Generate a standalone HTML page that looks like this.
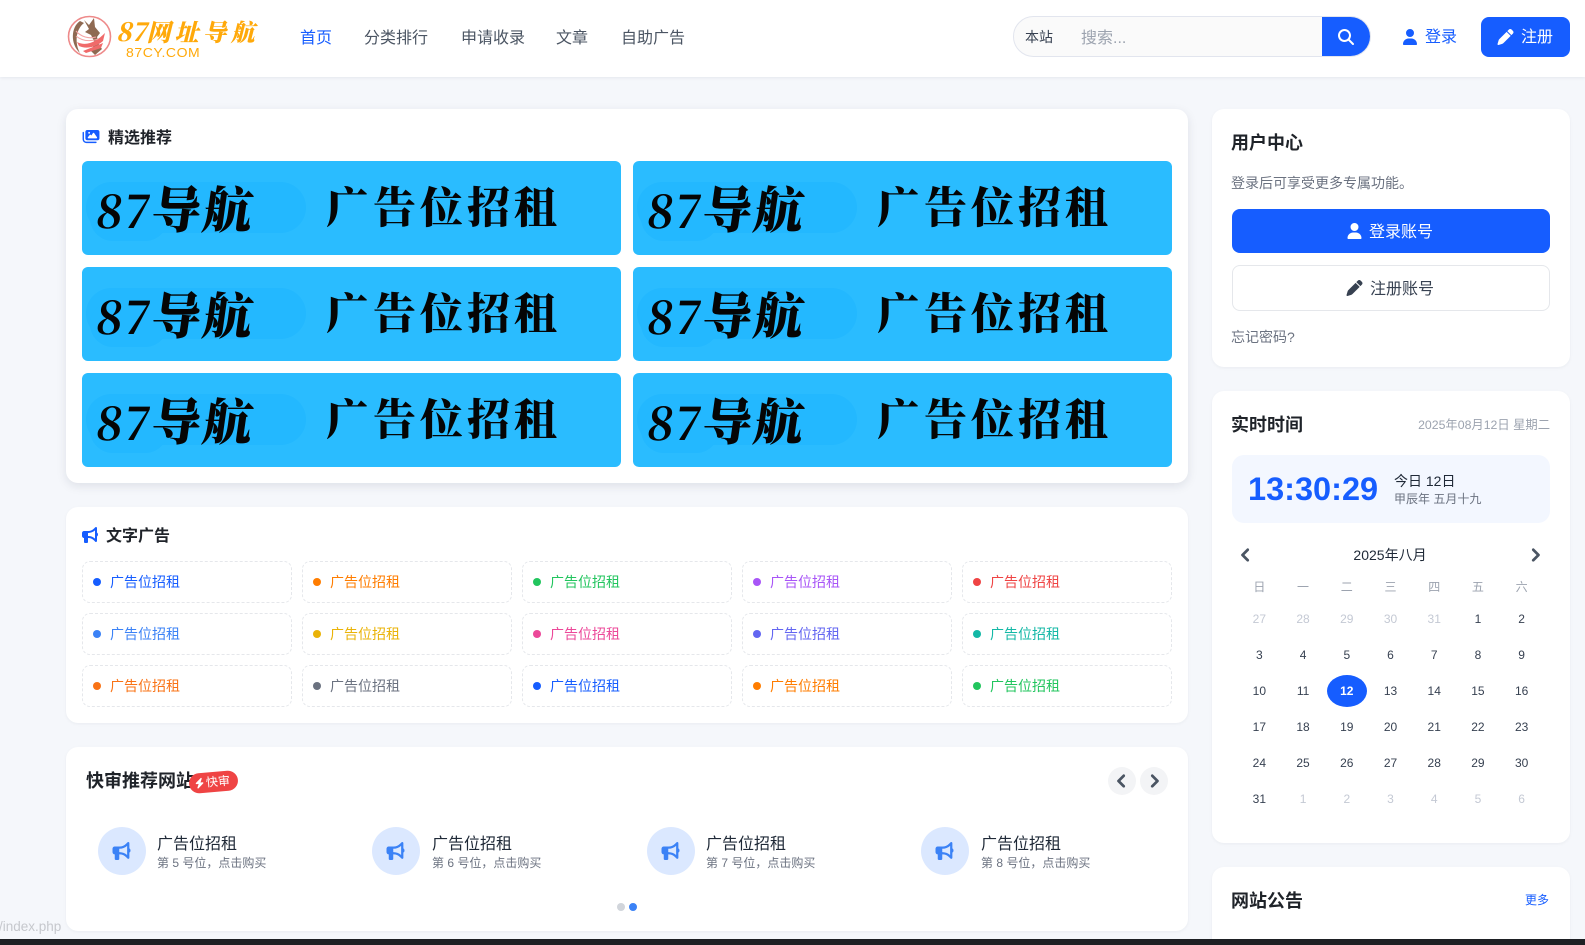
<!DOCTYPE html>
<html lang="zh-CN">
<head>
<meta charset="utf-8">
<title>87网址导航</title>
<style>
*{box-sizing:border-box;margin:0;padding:0}
html,body{width:1585px;height:945px;overflow:hidden;background:#f5f7fb}
body{position:relative;font-family:"Liberation Sans","Noto Sans CJK SC",sans-serif;color:#1f2329}
.a{position:absolute}
.t{position:absolute;white-space:nowrap}
.card{position:absolute;background:#fff;border-radius:12px;box-shadow:0 1px 3px rgba(20,30,60,.05)}
svg{display:block;fill:currentColor}
svg.th{stroke:currentColor;stroke-width:36;overflow:visible}
.hdr{position:absolute;left:0;top:0;width:1585px;height:77px;background:#fff;box-shadow:0 1px 3px rgba(20,30,60,.07)}
.nav{font-size:16px;line-height:24px;top:27px;color:#4b5563}
.ban{position:absolute;width:539px;height:94px;background:#2abcff;border-radius:6px;overflow:hidden;color:#050505;font-family:"Noto Serif CJK SC","Liberation Serif",serif;font-weight:900}
.ban i{position:absolute;display:block;background:#23b8ff}
.ban i.x{left:4px;top:21px;width:220px;height:51px;border-radius:26px}
.ban i.y{left:8px;top:34px;width:78px;height:46px;border-radius:24px}
.ban b{position:absolute;white-space:nowrap;font-weight:900}
.ban b.l{left:15px;top:19px;font-size:50px;line-height:54px;letter-spacing:1px;transform:skewX(-8deg)}
.ban b.l u{text-decoration:none;font-size:45px;font-weight:700;letter-spacing:1px}
.ban b.r{left:244px;top:20px;font-size:43px;line-height:50px;letter-spacing:4px}
.ad{position:absolute;width:210px;height:42px;border:1px dashed #e5e7eb;border-radius:8px;font-size:14px;line-height:40px;padding-left:27px;white-space:nowrap}
.ad:before{content:"";position:absolute;left:10px;top:16px;width:8px;height:8px;border-radius:50%;background:currentColor}
.cir{position:absolute;top:827px;width:48px;height:48px;border-radius:50%;background:#dbe8ff;color:#3b82f6}
.cir svg{position:absolute;left:14px;top:15px;width:19px;height:18px}
.q1{top:833px;font-size:16px;line-height:24px;color:#1f2937}
.q2{top:854px;font-size:12px;line-height:18px;color:#6b7280}
.h3{font-size:18px;font-weight:700;line-height:26px;color:#1f2329}
.h4{font-size:16px;font-weight:700;line-height:24px;color:#1f2329}
.cal{position:absolute;left:1237.5px;width:306px;display:grid;grid-template-columns:repeat(7,1fr);grid-auto-rows:36px;text-align:center;font-size:12px;line-height:36px;color:#374151}
.cal span.g{color:#c4c9d4}
.cal span.c{position:relative;color:#fff;font-weight:700;z-index:1}
.cal span.c:before{content:"";position:absolute;left:1.85px;top:2px;width:40px;height:32px;border-radius:50%;background:#165dff;z-index:-1}
</style>
</head>
<body>
<svg width="0" height="0" style="position:absolute">
<symbol id="user" viewBox="0 0 448 512"><path d="M224 256A128 128 0 1 0 224 0a128 128 0 1 0 0 256zm-45.7 48C79.8 304 0 383.8 0 482.3C0 498.7 13.3 512 29.7 512H418.3c16.4 0 29.7-13.3 29.7-29.7C448 383.8 368.2 304 269.7 304H178.3z"/></symbol>
<symbol id="pen" viewBox="0 0 512 512"><path d="M362.7 19.3L314.3 67.7 444.3 197.7l48.4-48.4c25-25 25-65.5 0-90.5L453.3 19.3c-25-25-65.5-25-90.5 0zm-71 71L58.6 323.5c-10.4 10.4-18 23.3-22.2 37.4L1 481.2C-1.5 489.7 .8 498.8 7 505s15.3 8.5 23.7 6.1l120.3-35.4c14.1-4.2 27-11.8 37.4-22.2L421.7 220.3 291.7 90.3z"/></symbol>
<symbol id="search" viewBox="0 0 512 512"><path d="M416 208c0 45.9-14.9 88.3-40 122.7L502.6 457.4c12.5 12.5 12.5 32.8 0 45.3s-32.8 12.5-45.3 0L330.7 376c-34.4 25.2-76.8 40-122.7 40C93.1 416 0 322.9 0 208S93.1 0 208 0S416 93.1 416 208zM208 352a144 144 0 1 0 0-288 144 144 0 1 0 0 288z"/></symbol>
<symbol id="horn" viewBox="0 0 512 512"><path d="M480 32c0-12.9-7.8-24.6-19.8-29.6s-25.7-2.2-34.9 6.9L381.7 53c-48 48-113.1 75-181 75H192 160 64c-35.3 0-64 28.7-64 64v96c0 35.3 28.7 64 64 64l0 128c0 17.7 14.3 32 32 32h64c17.7 0 32-14.3 32-32V352l8.7 0c67.9 0 133 27 181 75l43.6 43.6c9.2 9.2 22.9 11.9 34.9 6.9s19.8-16.6 19.8-29.6V300.4c18.6-8.8 32-32.5 32-60.4s-13.4-51.6-32-60.4V32zm-64 76.7V240 371.3C357.2 317.8 280.5 288 200.7 288H192V192h8.7c79.8 0 156.5-29.8 215.3-83.3z"/></symbol>
<symbol id="cl" viewBox="0 0 320 512"><path d="M9.4 233.4c-12.5 12.5-12.5 32.8 0 45.3l192 192c12.5 12.5 32.8 12.5 45.3 0s12.5-32.8 0-45.3L77.3 256 246.6 86.6c12.5-12.5 12.5-32.8 0-45.3s-32.8-12.5-45.3 0l-192 192z"/></symbol>
<symbol id="cr" viewBox="0 0 320 512"><path d="M310.6 233.4c12.5 12.5 12.5 32.8 0 45.3l-192 192c-12.5 12.5-32.8 12.5-45.3 0s-12.5-32.8 0-45.3L242.7 256 73.4 86.6c-12.5-12.5-12.5-32.8 0-45.3s32.8-12.5 45.3 0l192 192z"/></symbol>
<symbol id="bolt" viewBox="0 0 448 512"><path d="M349.4 44.6c5.9-13.7 1.5-29.7-10.6-38.5s-28.6-8-39.9 1.8l-256 224c-10 8.8-13.6 22.9-8.9 35.3S50.7 288 64 288H175.5L98.6 467.4c-5.9 13.7-1.5 29.7 10.6 38.5s28.6 8 39.9-1.8l256-224c10-8.8 13.6-22.9 8.9-35.3s-16.6-20.7-30-20.7H272.5L349.4 44.6z"/></symbol>
<symbol id="imgs" viewBox="0 0 576 512"><path d="M160 32c-35.3 0-64 28.7-64 64V320c0 35.3 28.7 64 64 64H512c35.3 0 64-28.7 64-64V96c0-35.3-28.7-64-64-64H160zM396 138.7l96 144c4.9 7.4 5.4 16.8 1.2 24.6S480.9 320 472 320H328 280 200c-9.2 0-17.6-5.3-21.6-13.6s-2.9-18.2 2.9-25.4l64-80c4.6-5.7 11.4-9 18.7-9s14.2 3.3 18.7 9l17.3 21.6 56-84C360.5 132 368 128 376 128s15.5 4 20 10.7zM192 128a32 32 0 1 1 64 0 32 32 0 1 1 -64 0zM48 120c0-13.3-10.7-24-24-24S0 106.7 0 120V344c0 75.1 60.9 136 136 136H456c13.3 0 24-10.7 24-24s-10.7-24-24-24H136c-48.6 0-88-39.4-88-88V120z"/></symbol>
</svg>

<!-- header -->
<div class="hdr"></div>
<svg class="a" style="left:67px;top:15px" width="45" height="43" viewBox="0 0 45 43">
<ellipse cx="22.5" cy="21.5" rx="21" ry="20" fill="none" stroke="#ee8a8a" stroke-width="1.6"/>
<path d="M13 6C4 12 3 29 13 38 8 29 8 15 17 8Z" fill="#8f6a52"/>
<path d="M17 5L22 10 27 3 28 12 33 18 30 22 32 30 35 34 28 40 24 36 28 28 24 20 18 17 22 14Z" fill="#8f6a52"/>
<path d="M10 27C20 32 30 26 38 18L36 26C28 33 18 34 12 31Z" fill="#f06a6a"/>
<path d="M16 36L36 28 34 33 19 38Z" fill="#f06a6a"/>
<path d="M9 16C14 22 22 24 29 22M9 21C15 26 22 27 31 24" fill="none" stroke="#f4a5a5" stroke-width="1.1"/>
</svg>
<div class="t" style="left:116px;top:16px;font-family:'Noto Serif CJK SC','Liberation Serif',serif;font-weight:900;font-style:italic;font-size:24px;line-height:30px;letter-spacing:4px;color:#ffa90a"><span style="font-size:25px;letter-spacing:0">87</span>网址导航</div>
<div class="t" style="left:126px;top:46px;font-size:12.5px;line-height:14px;letter-spacing:.5px;color:#ffa90a;transform:scaleX(1.12);transform-origin:left">87CY.COM</div>
<div class="t nav" style="left:300px;color:#165dff">首页</div>
<div class="t nav" style="left:364px">分类排行</div>
<div class="t nav" style="left:461px">申请收录</div>
<div class="t nav" style="left:556px">文章</div>
<div class="t nav" style="left:621px">自助广告</div>

<div class="a" style="left:1013px;top:16px;width:358px;height:41px;border:1px solid #e2e5ee;border-radius:21px;background:#fafafa;overflow:hidden">
<div class="a" style="right:-1px;top:-1px;width:49px;height:41px;background:#165dff"></div>
</div>
<div class="t" style="left:1025px;top:27px;font-size:14px;line-height:20px;color:#374151">本站</div>
<div class="t" style="left:1081px;top:27px;font-size:16px;line-height:24px;color:#9ca3af">搜索...</div>
<svg class="a" style="left:1338px;top:29px;color:#fff" width="16" height="16"><use href="#search"/></svg>
<svg class="a" style="left:1403px;top:29px;color:#165dff" width="14" height="16"><use href="#user"/></svg>
<div class="t" style="left:1425px;top:26px;font-size:16px;line-height:24px;color:#165dff">登录</div>
<div class="a" style="left:1481px;top:17px;width:89px;height:40px;background:#165dff;border-radius:8px"></div>
<svg class="a" style="left:1497px;top:29px;color:#fff" width="17" height="16"><use href="#pen"/></svg>
<div class="t" style="left:1521px;top:26px;font-size:16px;line-height:24px;color:#fff">注册</div>

<!-- featured -->
<div class="card" style="left:66px;top:109px;width:1122px;height:374px;box-shadow:0 3px 10px rgba(20,30,60,.1)"></div>
<svg class="a" style="left:82px;top:129px;color:#165dff" width="18" height="15"><use href="#imgs"/></svg>
<div class="t h4" style="left:108px;top:127px">精选推荐</div>
<div class="ban" style="left:82px;top:161px"><i class="x"></i><i class="y"></i><b class="l"><u>87</u>导航</b><b class="r">广告位招租</b></div>
<div class="ban" style="left:633px;top:161px"><i class="x"></i><i class="y"></i><b class="l"><u>87</u>导航</b><b class="r">广告位招租</b></div>
<div class="ban" style="left:82px;top:267px"><i class="x"></i><i class="y"></i><b class="l"><u>87</u>导航</b><b class="r">广告位招租</b></div>
<div class="ban" style="left:633px;top:267px"><i class="x"></i><i class="y"></i><b class="l"><u>87</u>导航</b><b class="r">广告位招租</b></div>
<div class="ban" style="left:82px;top:373px"><i class="x"></i><i class="y"></i><b class="l"><u>87</u>导航</b><b class="r">广告位招租</b></div>
<div class="ban" style="left:633px;top:373px"><i class="x"></i><i class="y"></i><b class="l"><u>87</u>导航</b><b class="r">广告位招租</b></div>

<!-- text ads -->
<div class="card" style="left:66px;top:507px;width:1122px;height:216px"></div>
<svg class="a" style="left:82px;top:527px;color:#165dff" width="16" height="16"><use href="#horn"/></svg>
<div class="t h4" style="left:106px;top:525px">文字广告</div>
<div class="ad" style="left:82px;top:561px;color:#165dff">广告位招租</div>
<div class="ad" style="left:302px;top:561px;color:#ff7d00">广告位招租</div>
<div class="ad" style="left:522px;top:561px;color:#22c55e">广告位招租</div>
<div class="ad" style="left:742px;top:561px;color:#a855f7">广告位招租</div>
<div class="ad" style="left:962px;top:561px;color:#ef4444">广告位招租</div>
<div class="ad" style="left:82px;top:613px;color:#3b82f6">广告位招租</div>
<div class="ad" style="left:302px;top:613px;color:#eab308">广告位招租</div>
<div class="ad" style="left:522px;top:613px;color:#ec4899">广告位招租</div>
<div class="ad" style="left:742px;top:613px;color:#6366f1">广告位招租</div>
<div class="ad" style="left:962px;top:613px;color:#14b8a6">广告位招租</div>
<div class="ad" style="left:82px;top:665px;color:#f97316">广告位招租</div>
<div class="ad" style="left:302px;top:665px;color:#6b7280">广告位招租</div>
<div class="ad" style="left:522px;top:665px;color:#165dff">广告位招租</div>
<div class="ad" style="left:742px;top:665px;color:#ff7d00">广告位招租</div>
<div class="ad" style="left:962px;top:665px;color:#22c55e">广告位招租</div>

<!-- quick review -->
<div class="card" style="left:66px;top:747px;width:1122px;height:184px"></div>
<div class="t h3" style="left:86px;top:768px">快审推荐网站</div>
<div class="a" style="left:189px;top:772px;width:49px;height:20px;border-radius:10px;background:#ef4444;color:#fff;transform:rotate(-5deg)">
<svg class="a" style="left:6px;top:4px" width="9" height="12"><use href="#bolt"/></svg>
<span class="t" style="left:17px;top:2px;font-size:12px;line-height:16px">快审</span>
</div>
<div class="a" style="left:1108px;top:767px;width:28px;height:28px;border-radius:50%;background:#f3f4f6;color:#4b5563"><svg class="a th" style="left:9px;top:7px" width="10" height="14"><use href="#cl"/></svg></div>
<div class="a" style="left:1140px;top:767px;width:28px;height:28px;border-radius:50%;background:#f3f4f6;color:#4b5563"><svg class="a th" style="left:9px;top:7px" width="10" height="14"><use href="#cr"/></svg></div>

<div class="cir" style="left:98px"><svg><use href="#horn"/></svg></div>
<div class="t q1" style="left:157px">广告位招租</div><div class="t q2" style="left:157px">第 5 号位，点击购买</div>
<div class="cir" style="left:372px"><svg><use href="#horn"/></svg></div>
<div class="t q1" style="left:432px">广告位招租</div><div class="t q2" style="left:432px">第 6 号位，点击购买</div>
<div class="cir" style="left:647px"><svg><use href="#horn"/></svg></div>
<div class="t q1" style="left:706px">广告位招租</div><div class="t q2" style="left:706px">第 7 号位，点击购买</div>
<div class="cir" style="left:921px"><svg><use href="#horn"/></svg></div>
<div class="t q1" style="left:981px">广告位招租</div><div class="t q2" style="left:981px">第 8 号位，点击购买</div>
<div class="a" style="left:617px;top:903px;width:8px;height:8px;border-radius:50%;background:#d1d5db"></div>
<div class="a" style="left:629px;top:903px;width:8px;height:8px;border-radius:50%;background:#3b82f6"></div>

<!-- user center -->
<div class="card" style="left:1212px;top:109px;width:358px;height:258px"></div>
<div class="t h3" style="left:1231px;top:130px">用户中心</div>
<div class="t" style="left:1231px;top:173px;font-size:14px;line-height:20px;color:#6b7280">登录后可享受更多专属功能。</div>
<div class="a" style="left:1232px;top:209px;width:318px;height:44px;background:#165dff;border-radius:8px"></div>
<svg class="a" style="left:1347px;top:223px;color:#fff" width="15" height="16"><use href="#user"/></svg>
<div class="t" style="left:1369px;top:221px;font-size:16px;line-height:24px;color:#fff">登录账号</div>
<div class="a" style="left:1232px;top:265px;width:318px;height:46px;background:#fff;border:1px solid #e5e7eb;border-radius:8px"></div>
<svg class="a" style="left:1346px;top:280px;color:#374151" width="17" height="16"><use href="#pen"/></svg>
<div class="t" style="left:1370px;top:278px;font-size:16px;line-height:24px;color:#374151">注册账号</div>
<div class="t" style="left:1231px;top:327px;font-size:14px;line-height:20px;color:#6b7280">忘记密码?</div>

<!-- clock -->
<div class="card" style="left:1212px;top:391px;width:358px;height:452px"></div>
<div class="t h3" style="left:1231px;top:412px">实时时间</div>
<div class="t" style="right:35px;top:415px;font-size:12.3px;line-height:20px;color:#9ca3af">2025年08月12日 星期二</div>
<div class="a" style="left:1232px;top:455px;width:318px;height:68px;background:#f3f7ff;border-radius:12px"></div>
<div class="t" style="left:1248px;top:470px;font-size:32.5px;font-weight:700;line-height:38px;color:#165dff">13:30:29</div>
<div class="t" style="left:1394px;top:471px;font-size:14px;line-height:20px;color:#1f2937">今日 12日</div>
<div class="t" style="left:1394px;top:490px;font-size:12px;line-height:18px;color:#6b7280">甲辰年 五月十九</div>
<svg class="a th" style="left:1241px;top:548px;color:#4b5563" width="10" height="14"><use href="#cl"/></svg>
<svg class="a th" style="left:1530px;top:548px;color:#4b5563" width="10" height="14"><use href="#cr"/></svg>
<div class="t" style="left:1230px;width:320px;text-align:center;top:545px;font-size:14px;line-height:20px;color:#1f2937">2025年八月</div>
<div class="cal" style="top:569px;color:#9ca3af"><span>日</span><span>一</span><span>二</span><span>三</span><span>四</span><span>五</span><span>六</span></div>
<div class="cal" style="top:600.5px">
<span class="g">27</span><span class="g">28</span><span class="g">29</span><span class="g">30</span><span class="g">31</span><span>1</span><span>2</span>
<span>3</span><span>4</span><span>5</span><span>6</span><span>7</span><span>8</span><span>9</span>
<span>10</span><span>11</span><span class="c">12</span><span>13</span><span>14</span><span>15</span><span>16</span>
<span>17</span><span>18</span><span>19</span><span>20</span><span>21</span><span>22</span><span>23</span>
<span>24</span><span>25</span><span>26</span><span>27</span><span>28</span><span>29</span><span>30</span>
<span>31</span><span class="g">1</span><span class="g">2</span><span class="g">3</span><span class="g">4</span><span class="g">5</span><span class="g">6</span>
</div>

<!-- notice -->
<div class="card" style="left:1212px;top:867px;width:358px;height:100px"></div>
<div class="t h3" style="left:1231px;top:888px">网站公告</div>
<div class="t" style="left:1525px;top:891px;font-size:12px;line-height:18px;color:#165dff">更多</div>

<!-- status bubble and bottom strip -->
<div class="t" style="left:-1px;top:917px;font-size:13.5px;line-height:20px;color:#c6c8cd">/index.php</div>
<div class="a" style="left:0;top:939px;width:1585px;height:6px;background:#1e2024"></div>
</body>
</html>
